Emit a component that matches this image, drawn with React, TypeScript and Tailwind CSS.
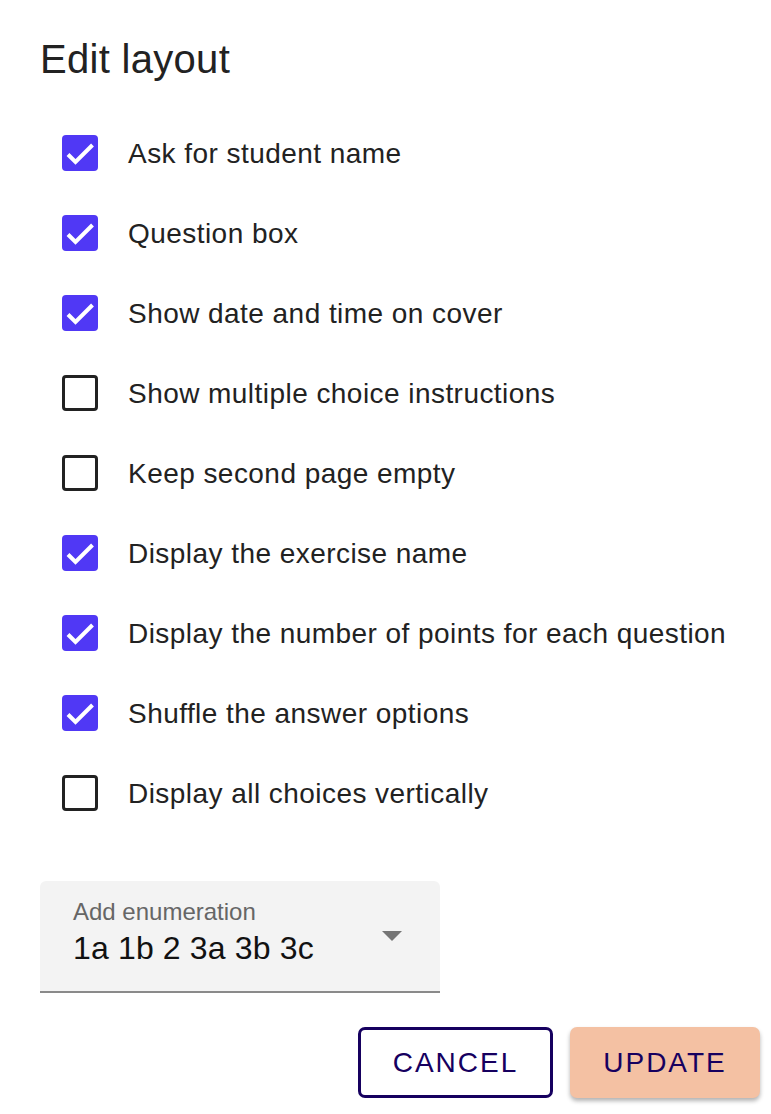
import { useState } from "react"

const options = [
  { label: "Ask for student name", checked: true },
  { label: "Question box", checked: true },
  { label: "Show date and time on cover", checked: true },
  { label: "Show multiple choice instructions", checked: false },
  { label: "Keep second page empty", checked: false },
  { label: "Display the exercise name", checked: true },
  { label: "Display the number of points for each question", checked: true },
  { label: "Shuffle the answer options", checked: true },
  { label: "Display all choices vertically", checked: false },
]

function Checkbox({ checked, onClick }: { checked: boolean; onClick: () => void }) {
  if (checked) {
    return (
      <button onClick={onClick} className="w-[36px] h-[36px] rounded-[4px] bg-[#5038f5] shrink-0 block">
        <svg width="36" height="36" viewBox="0 0 36 36">
          <path d="M6 19.5L13.5 27L30.5 10" fill="none" stroke="white" strokeWidth="4" />
        </svg>
      </button>
    )
  }
  return (
    <button
      onClick={onClick}
      className="w-[36px] h-[36px] rounded-[4px] border-[3.5px] border-[#222] bg-white shrink-0"
    />
  )
}

export default function App() {
  const [items, setItems] = useState(options)

  const toggle = (i: number) =>
    setItems((prev) => prev.map((it, j) => (j === i ? { ...it, checked: !it.checked } : it)))

  return (
    <div className="w-[771px] h-[1114px] bg-white text-[#222] font-['Liberation_Sans',Arial,sans-serif] pl-[40px] pr-[11px] pt-[36px]">
      <h1 className="text-[40px] leading-[46px] tracking-[0.3px] text-[#222]">Edit layout</h1>

      <div className="flex flex-col gap-[44px] pl-[22px] mt-[53px]">
        {items.map((it, i) => (
          <div key={it.label} className="flex items-center gap-[30px] h-[36px]">
            <Checkbox checked={it.checked} onClick={() => toggle(i)} />
            <span className="text-[28px] tracking-[0.45px] text-[#222] pt-[2px]">{it.label}</span>
          </div>
        ))}
      </div>

      {/* enumeration select */}
      <div className="mt-[70px] w-[400px] h-[112px] bg-[#f3f3f3] rounded-t-[6px] border-b-2 border-[#8a8a8a] relative pl-[33px] pt-[17px]">
        <div className="text-[24px] leading-[28px] text-[#666]">Add enumeration</div>
        <div className="text-[32px] leading-[38px] tracking-[0.15px] text-[#111] mt-[3px]">1a 1b 2 3a 3b 3c</div>
        <svg className="absolute left-[342px] top-[50px]" width="20" height="10" viewBox="0 0 20 10">
          <path d="M0 0h20L10 10z" fill="#757575" />
        </svg>
      </div>

      <div className="flex justify-end gap-[17px] mt-[34px]">
        <button className="w-[195px] h-[71px] border-[3px] border-[#16005f] rounded-[7px] text-[#16005f] text-[28px] tracking-[2px] bg-white">
          CANCEL
        </button>
        <button className="w-[190px] h-[71px] rounded-[7px] bg-[#f4c1a3] text-[#16005f] text-[28px] tracking-[2px] shadow-[0_3px_4px_rgba(0,0,0,0.3)]">
          UPDATE
        </button>
      </div>
    </div>
  )
}
